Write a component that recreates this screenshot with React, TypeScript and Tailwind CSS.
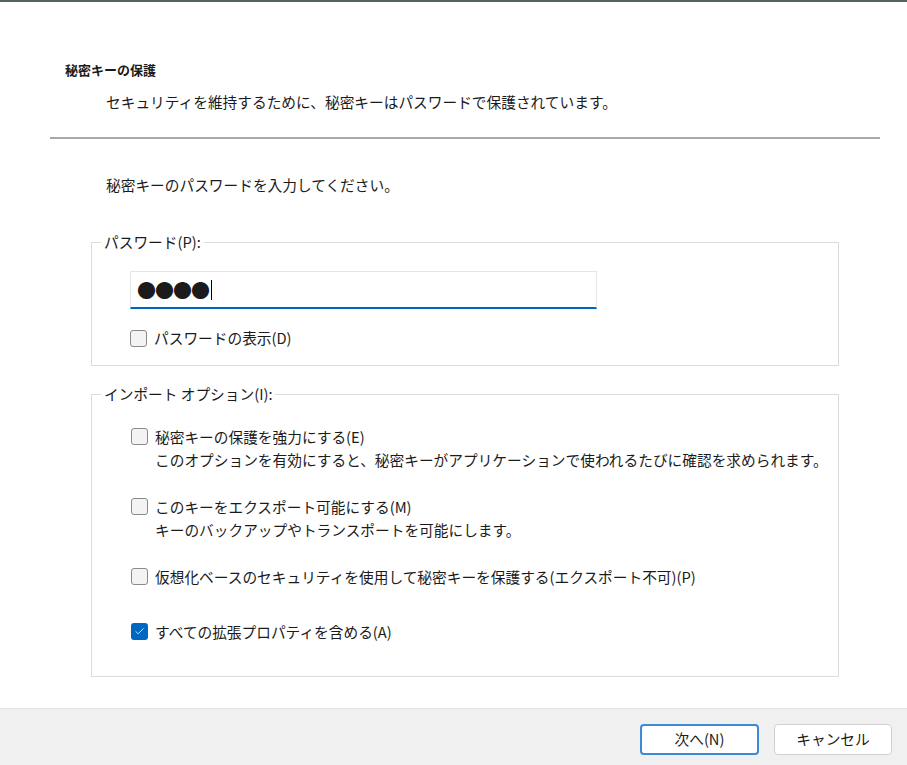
import { Check } from 'lucide-react';

const OPTIONS = [
  {
    id: 'strong',
    label: '秘密キーの保護を強力にする(E)',
    note: 'このオプションを有効にすると、秘密キーがアプリケーションで使われるたびに確認を求められます。',
    checked: false,
    gap: 'mt-0',
  },
  {
    id: 'exportable',
    label: 'このキーをエクスポート可能にする(M)',
    note: 'キーのバックアップやトランスポートを可能にします。',
    checked: false,
    gap: 'mt-[24px]',
  },
  {
    id: 'vbs',
    label: '仮想化ベースのセキュリティを使用して秘密キーを保護する(エクスポート不可)(P)',
    note: '',
    checked: false,
    gap: 'mt-[24px]',
  },
  {
    id: 'ext',
    label: 'すべての拡張プロパティを含める(A)',
    note: '',
    checked: true,
    gap: 'mt-[32px]',
  },
];

function Box({ checked }: { checked: boolean }) {
  return checked ? (
    <span className="flex h-[17px] w-[17px] shrink-0 items-center justify-center rounded-[3px] bg-[#0067c0]">
      <Check className="h-[11px] w-[11px] text-white" strokeWidth={1.75} />
    </span>
  ) : (
    <span className="block h-[17px] w-[17px] shrink-0 rounded-[3px] border border-[#8a8a8a] bg-[#f3f3f3]" />
  );
}

export default function App() {
  return (
    <div className="flex h-[765px] w-full flex-col bg-white text-[#1b1b1b] font-['Noto_Sans_CJK_JP',sans-serif]">
      <div className="h-[2px] bg-[#55615f]" />

      <div className="flex-1">
        <div className="pl-[65px] pt-[58px] text-[13px] font-bold leading-[20px]">秘密キーの保護</div>
        <div className="mt-[12px] pl-[106px] text-[14.7px] leading-[20px]">
          セキュリティを維持するために、秘密キーはパスワードで保護されています。
        </div>
        <div className="ml-[50px] mr-[27px] mt-[25px] h-[2px] bg-[#a8a8a8]" />

        <div className="mt-[36px] pl-[106px] text-[14.7px] leading-[20px]">
          秘密キーのパスワードを入力してください。
        </div>

        {/* Password group */}
        <fieldset className="ml-[91px] mr-[68px] mt-[37px] border border-[#dcdcdc]">
          <legend className="ml-[9px] px-[3px] text-[14.7px] leading-[20px]">パスワード(P):</legend>
          <div className="pb-[17px] pl-[38px] pt-[19px]">
            <div className="flex h-[38px] w-[467px] items-center border border-[#e6e6e6] border-b-2 border-b-[#0067c0] pl-[6px]">
              <span className="text-[19px] leading-none tracking-[-1px]">●●●●</span>
              <span className="ml-[2px] h-[20px] w-px bg-black" />
            </div>
            <label className="mt-[19px] flex items-center gap-[7px] text-[14.7px] leading-[20px]">
              <Box checked={false} />
              パスワードの表示(D)
            </label>
          </div>
        </fieldset>

        {/* Import options */}
        <fieldset className="ml-[91px] mr-[68px] mt-[18px] border border-[#dcdcdc]">
          <legend className="ml-[9px] px-[3px] text-[14.7px] leading-[20px]">インポート オプション(I):</legend>
          <div className="pb-[33px] pl-[39px] pt-[21px]">
            {OPTIONS.map((o) => (
              <div key={o.id} className={`${o.gap} flex gap-[7px] text-[14.7px] leading-[23px]`}>
                <span className="block pt-[3px]">
                  <Box checked={o.checked} />
                </span>
                <div>
                  <div>{o.label}</div>
                  {o.note && <div>{o.note}</div>}
                </div>
              </div>
            ))}
          </div>
        </fieldset>
      </div>

      {/* Footer */}
      <div className="flex h-[57px] justify-end gap-[15px] border-t border-[#e3e3e3] bg-[#f0f0f0] pr-[15px] pt-[15px]">
        <button className="h-[31px] w-[119px] rounded-[4px] border-2 border-[#3b8ad6] bg-white text-[14.7px] leading-none">
          次へ(N)
        </button>
        <button className="h-[31px] w-[118px] rounded-[4px] border border-[#d0d0d0] bg-white text-[14.7px] leading-none">
          キャンセル
        </button>
      </div>
    </div>
  );
}
